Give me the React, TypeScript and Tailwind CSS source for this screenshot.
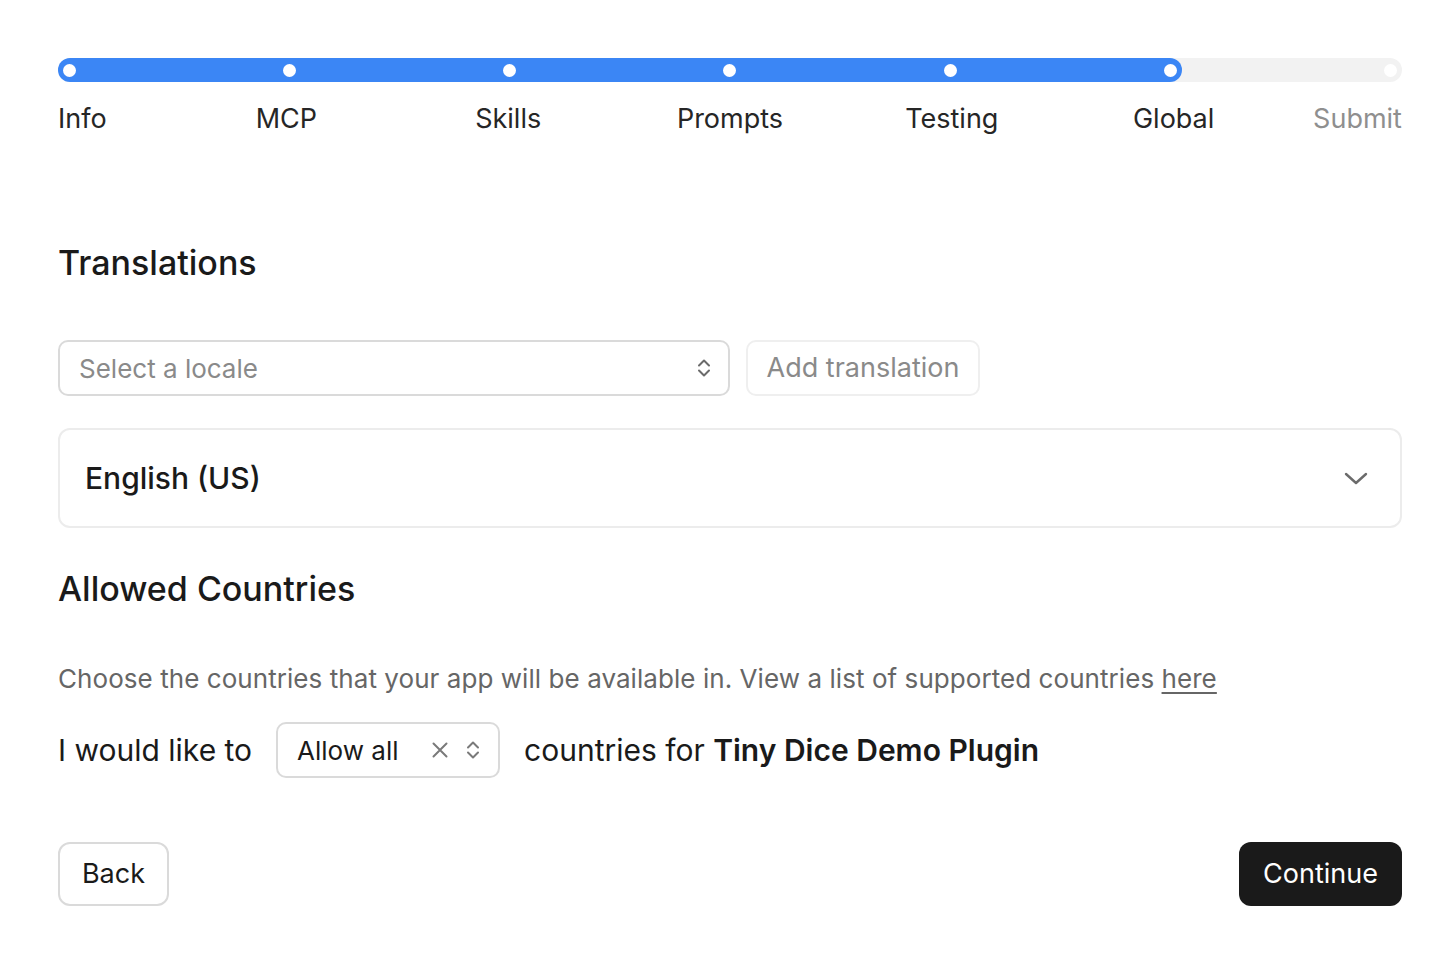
import React from "react";

const steps = ["Info", "MCP", "Skills", "Prompts", "Testing", "Global", "Submit"];
const current = 5;

function UpDown({ className = "" }: { className?: string }) {
  return (
    <svg width="18" height="24" viewBox="0 0 18 24" fill="none" className={className}>
      <path d="M4 9.5 9 4.5l5 5" stroke="currentColor" strokeWidth="2" strokeLinecap="round" strokeLinejoin="round" />
      <path d="M4 14.5 9 19.5l5-5" stroke="currentColor" strokeWidth="2" strokeLinecap="round" strokeLinejoin="round" />
    </svg>
  );
}

export default function App() {
  return (
    <div
      className="min-h-screen bg-white text-[#1a1a1a] pl-[58px] pr-[50px] pt-[58px]"
      style={{ fontFamily: "Inter, 'Noto Sans', sans-serif" }}
    >
      {/* stepper track */}
      <div className="relative h-[24px] rounded-full bg-[#f2f2f2]">
        <div className="absolute left-0 top-0 h-full w-[1124px] rounded-full bg-[#3b86f5]" />
        <div className="relative flex h-full items-center justify-between px-[5px]">
          {steps.map((s) => (
            <span key={s} className="h-[13px] w-[13px] rounded-full bg-white" />
          ))}
        </div>
      </div>
      <div className="mt-[21px] flex justify-between px-[5px] text-[27px] leading-[32px]">
        {steps.map((s, i) => (
          <div
            key={s}
            className={
              "flex w-[13px] whitespace-nowrap " +
              (i === 0 ? "justify-start -ml-[5px]" : i === steps.length - 1 ? "justify-end -mr-[5px]" : "justify-center")
            }
          >
            <span className={i > current ? "text-[#8f8f8f]" : "text-[#262626]"}>{s}</span>
          </div>
        ))}
      </div>

      <h2 className="mt-[108px] text-[34px] leading-[40px] font-medium">Translations</h2>

      <div className="mt-[57px] flex gap-[16px]">
        <div className="flex h-[56px] w-[672px] items-center justify-between rounded-[10px] border-2 border-[#dadada] pl-[19px] pr-[15px]">
          <span className="text-[26px] text-[#8a8a8a]">Select a locale</span>
          <UpDown className="text-[#6b6b6b]" />
        </div>
        <button className="h-[56px] w-[234px] rounded-[10px] border-2 border-[#efefef] text-[27px] text-[#8a8a8a]">
          Add translation
        </button>
      </div>

      <div className="mt-[32px] flex h-[100px] items-center justify-between rounded-[12px] border-2 border-[#ececec] pl-[25px] pr-[30px]">
        <span className="text-[30px] font-medium text-[#1a1a1a]">English (US)</span>
        <svg width="28" height="28" viewBox="0 0 28 28" fill="none">
          <path d="M4 10l10 9 10-9" stroke="#6b6b6b" strokeWidth="2.4" strokeLinecap="round" strokeLinejoin="round" />
        </svg>
      </div>

      <h2 className="mt-[41px] text-[34px] leading-[40px] font-medium">Allowed Countries</h2>

      <p className="mt-[54px] text-[26px] leading-[32px] tracking-[0.06px] text-[#666666]">
        Choose the countries that your app will be available in. View a list of supported countries{" "}
        <span className="underline decoration-[1.5px] underline-offset-[4px]">here</span>
      </p>

      <div className="mt-[27px] flex items-center text-[30px]">
        <span className="text-[#1a1a1a]">I would like to</span>
        <div className="ml-[24px] flex h-[56px] w-[224px] items-center rounded-[10px] border-2 border-[#dadada] pl-[19px] pr-[16px]">
          <span className="text-[26px] text-[#1a1a1a]">Allow all</span>
          <svg className="ml-auto" width="20" height="20" viewBox="0 0 20 20" fill="none">
            <path d="M3.5 3.5l13 13M16.5 3.5l-13 13" stroke="#7a7a7a" strokeWidth="2" strokeLinecap="round" />
          </svg>
          <UpDown className="ml-[14px] text-[#7a7a7a]" />
        </div>
        <span className="ml-[24px] text-[#1a1a1a]">
          countries for <span className="font-semibold">Tiny Dice Demo Plugin</span>
        </span>
      </div>

      <div className="mt-[64px] flex justify-between">
        <button className="h-[64px] w-[111px] rounded-[12px] border-2 border-[#dadada] text-[27px] text-[#1a1a1a]">
          Back
        </button>
        <button className="h-[64px] w-[163px] rounded-[12px] bg-[#1a1a1a] text-[27px] text-white">
          Continue
        </button>
      </div>
    </div>
  );
}
